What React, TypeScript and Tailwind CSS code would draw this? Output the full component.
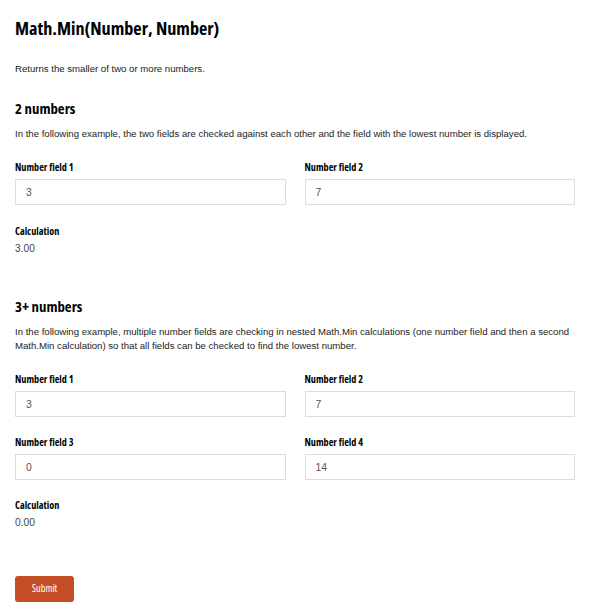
import React from "react"

const heading = "font-['Open_Sans',sans-serif] font-bold font-stretch-[75%] text-black"
const body = "font-['Liberation_Sans',Arial,sans-serif] text-[9.6px] leading-[14px] text-[#222]"

function Field({ label, value }: { label: string; value: string }) {
  return (
    <div className="flex flex-col">
      <label className={`${heading} text-[10.2px] leading-[14px] mb-[5px]`}>{label}</label>
      <input
        readOnly
        value={value}
        className={`${body} text-[10.4px] h-[26px] w-full border border-[#dcdcdc] px-[10px] text-[#555] outline-none`}
      />
    </div>
  )
}

function Calculation({ value }: { value: string }) {
  return (
    <div className="flex flex-col">
      <div className={`${heading} text-[10.2px] leading-[14px]`}>Calculation</div>
      <div className={`${body} text-[10.2px] text-[#444] mt-[4px]`}>{value}</div>
    </div>
  )
}

export default function App() {
  return (
    <div className="bg-white min-h-screen px-[15px] pt-[16px] pb-4 w-[590px]">
      <h1 className={`${heading} text-[18.2px] leading-[24px]`}>Math.Min(Number, Number)</h1>
      <p className={`${body} mt-[22px]`}>Returns the smaller of two or more numbers.</p>

      <h2 className={`${heading} text-[14.8px] leading-[20px] mt-[22px]`}>2 numbers</h2>
      <p className={`${body} mt-[9px]`}>
        In the following example, the two fields are checked against each other and the field with the lowest number
        is displayed.
      </p>
      <div className="grid grid-cols-2 gap-x-[19px] mt-[19px] w-[560px]">
        <Field label="Number field 1" value="3" />
        <Field label="Number field 2" value="7" />
      </div>
      <div className="mt-[19px]">
        <Calculation value="3.00" />
      </div>

      <h2 className={`${heading} text-[14.8px] leading-[20px] mt-[40px]`}>3+ numbers</h2>
      <p className={`${body} mt-[9px]`}>
        In the following example, multiple number fields are checking in nested Math.Min calculations (one number
        field and then a second Math.Min calculation) so that all fields can be checked to find the lowest number.
      </p>
      <div className="grid grid-cols-2 gap-x-[19px] gap-y-[18px] mt-[19px] w-[560px]">
        <Field label="Number field 1" value="3" />
        <Field label="Number field 2" value="7" />
        <Field label="Number field 3" value="0" />
        <Field label="Number field 4" value="14" />
      </div>
      <div className="mt-[18px]">
        <Calculation value="0.00" />
      </div>

      <button
        className={`${heading} mt-[46px] h-[26px] w-[59px] rounded-[3px] bg-[#c44f26] text-white text-[10.4px] font-normal`}
      >
        Submit
      </button>
    </div>
  )
}
